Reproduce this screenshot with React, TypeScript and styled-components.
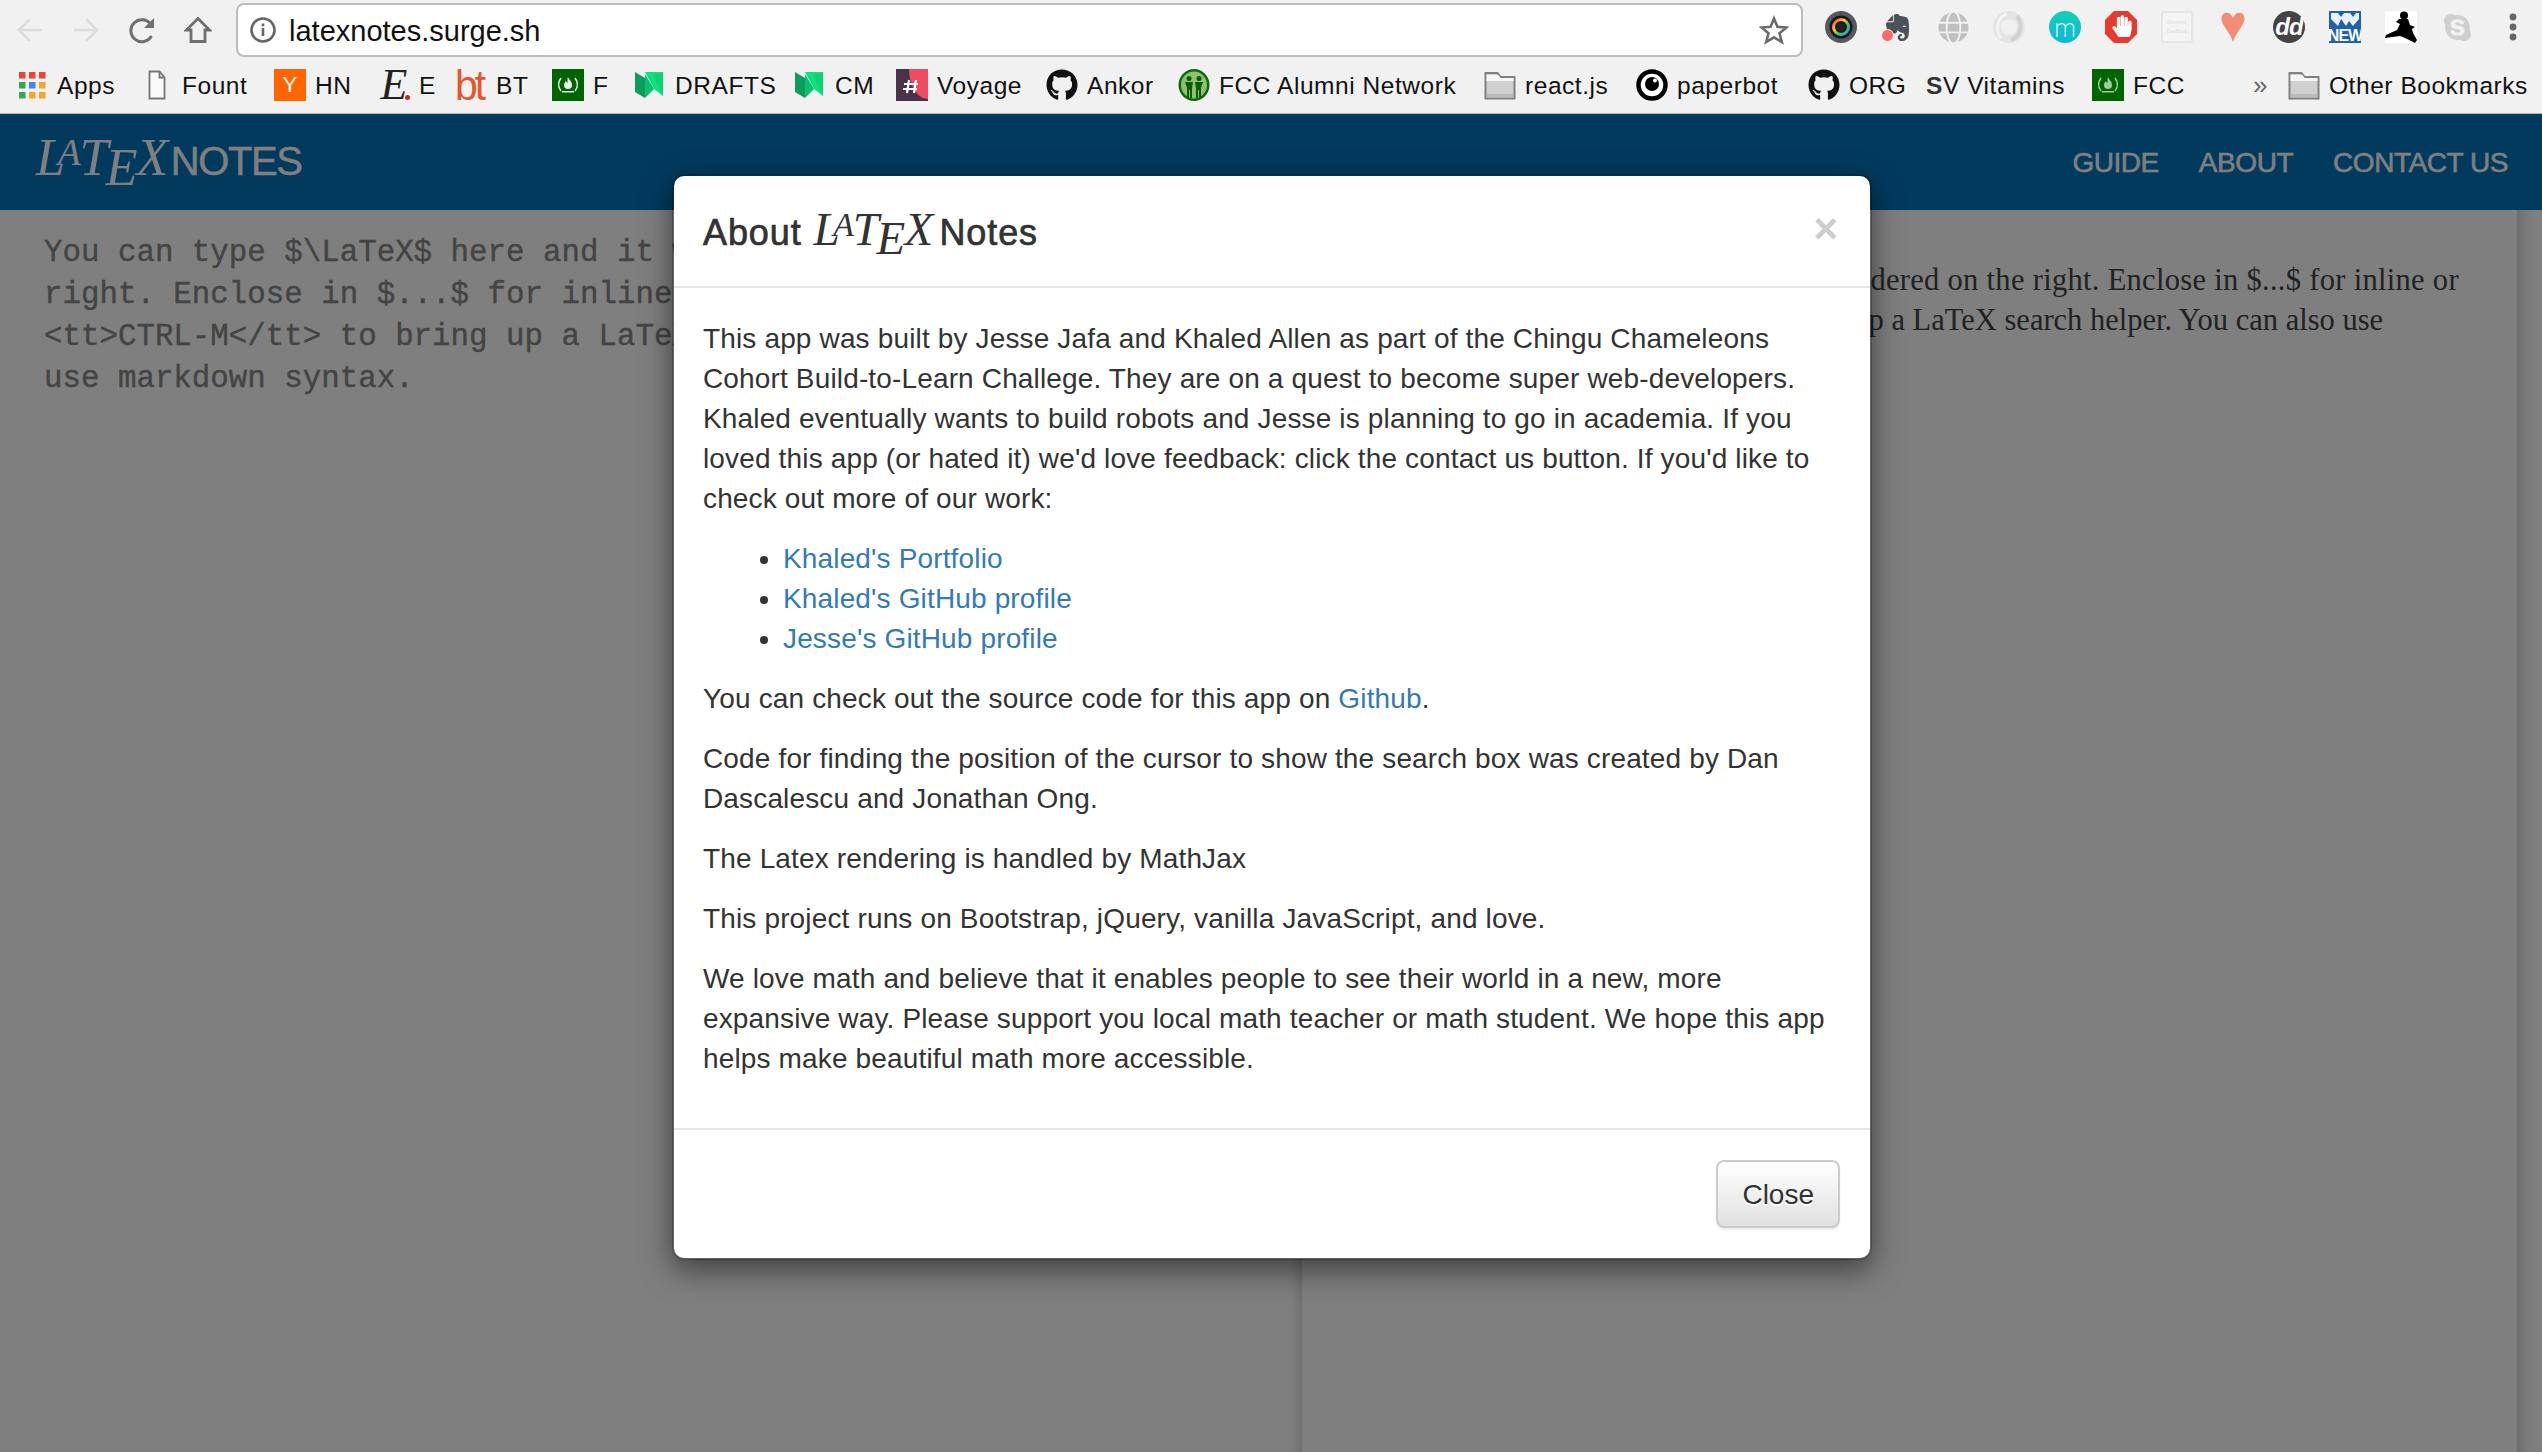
import React from "react";
import styled, { createGlobalStyle } from "styled-components";
import { FaGithub, FaEvernote, FaGlobe, FaSkype, FaHandPaper } from "react-icons/fa";

const Global = createGlobalStyle`
  html, body { margin: 0; padding: 0; height: 100%; background: #fff; overflow: hidden; }
  #root { height: 100%; }
  * { box-sizing: border-box; }
`;

const Shell = styled.div`
  width: 2542px; height: 1452px; display: flex; flex-direction: column;
  font-family: "Liberation Sans", Arial, sans-serif; overflow: hidden;
`;
const Chrome = styled.div`
  flex: 0 0 114px; background: #f1f1f1; border-bottom: 1px solid #b3b9bd;
  display: flex; flex-direction: column;
`;
const Toolbar = styled.div`
  height: 58px; padding: 3px 0 0 0; display: flex; align-items: flex-start;
`;
const NavButtons = styled.div`
  width: 236px; height: 54px; padding-left: 16px; display: flex; align-items: center; gap: 28px;
  & > svg { flex: none; }
`;
const AddressBar = styled.div`
  width: 1567px; height: 54px; background: #fff; border: 2px solid #bdbdbd; border-radius: 8px;
  display: flex; align-items: center; padding: 0 12px 0 12px; gap: 13px;
`;
const Url = styled.span`
  flex: 1; font-size: 29px; color: #111; padding-top: 2px;
`;
const Extensions = styled.div`
  display: flex; align-items: center; gap: 24px; padding: 8px 0 0 22px;
`;
const ExtSlot = styled.div`
  width: 32px; height: 32px; flex: none; display: flex; align-items: center; justify-content: center;
  position: relative;
`;
const ExtRound = styled(ExtSlot)<{ $bg: string }>`
  border-radius: 50%; background: ${(p) => p.$bg}; color: #fff; line-height: 28px;
`;
const MText = styled.span`font-size: 25px; font-weight: 300; color: #d8f6f6; font-family: "Open Sans", sans-serif;`;
const DdText = styled.span`font-size: 24px; font-weight: 700; font-style: italic; letter-spacing: -1px;`;
const NewBadge = styled(ExtSlot)`
  background: #1f62a8; color: #fff; font-size: 16px; line-height: 15px; font-weight: 700;
  align-items: flex-end; font-family: "Liberation Sans", sans-serif; letter-spacing: -1px; overflow: hidden;
`;
const NewArt = styled.svg`position: absolute; left: 0; top: 0;`;
const DiscoverBox = styled(ExtSlot)`
  background: #f4f4f4; border: 2px solid #e6e6e6; border-radius: 2px; color: #dcdcdc; font-size: 5px; line-height: 9px;
  flex-direction: column; text-align: center;
`;
const NoteDot = styled.span`
  position: absolute; left: 0; bottom: 1px; width: 13px; height: 13px; border-radius: 50%; background: #fb6a6a; border: 1px solid #fff;
`;

const BookmarksBar = styled.div`
  height: 55px; padding: 12px 0 0 0; display: flex; align-items: flex-start; position: relative;
`;
const Bookmark = styled.div<{ $w: number }>`
  flex: 0 0 ${(p) => p.$w}px; height: 32px; display: flex; align-items: center; gap: 9px;
  font-size: 24.5px; color: #111; letter-spacing: .55px; white-space: nowrap;
`;
const BookmarkIcon = styled.span`
  width: 32px; height: 32px; flex: none; display: flex; align-items: center; justify-content: center; margin-top: -2px;
`;
const SvLabel = styled.span`
  b { color: #333; }
`;
const Chevrons = styled.span`
  flex: 0 0 35px; font-size: 26px; line-height: 30px; color: #666;
`;

const Page = styled.div`
  flex: 1; position: relative; display: flex; flex-direction: column; min-height: 0;
`;
const Navbar = styled.nav`
  flex: 0 0 96px; background: #0474bc; display: flex; align-items: center; justify-content: space-between;
  padding: 0 34px 0 36px; color: #fff;
`;
const Brand = styled.div`
  display: flex; align-items: baseline; font-size: 40px; letter-spacing: -1.45px; margin-top: 2px;
  -webkit-text-stroke: .4px #fff;
`;
const Links = styled.div`
  display: flex; gap: 40px; font-size: 28px; letter-spacing: -.45px; margin-top: 1px; -webkit-text-stroke: .5px #fff;
`;
const Logo = styled.span<{ $size: number }>`
  font-family: "Liberation Serif", "Times New Roman", serif; font-style: italic; font-weight: 400;
  font-size: ${(p) => p.$size}px; letter-spacing: 0; white-space: nowrap; display: inline-block; line-height: 1;
  -webkit-text-stroke: 0;
`;
const LogoL = styled.span`margin-right: -.14em;`;
const LogoA = styled.span`font-size: .72em; vertical-align: .27em; margin-right: -.03em;`;
const LogoT = styled.span`margin-right: -.05em;`;
const LogoE = styled.span`vertical-align: -.2em; margin-right: -.02em;`;
const LogoX = styled.span`margin-right: .05em;`;

const Workspace = styled.div`
  flex: 1; display: flex; min-height: 0;
`;
const Editor = styled.div`
  flex: 0 0 1302px; padding: 22px 0 0 44px; background: #fff;
  font-family: "Liberation Mono", "Courier New", monospace; font-size: 30.8px; line-height: 42px; color: #888;
  white-space: pre; box-shadow: inset -12px 0 14px -10px rgba(0,0,0,.2); overflow: hidden;
  -webkit-text-stroke: .4px #888;
`;
const Preview = styled.div`
  flex: 1; padding: 50px 0 0 30px; background: #fff;
  font-family: "Liberation Serif", "Times New Roman", serif; font-size: 30.5px; line-height: 40px; color: #444;
  white-space: pre; overflow: hidden;
`;
const PreviewLine = styled.div<{ $spacing: number; $indent: number }>`
  letter-spacing: ${(p) => p.$spacing}px; margin-left: ${(p) => p.$indent}px;
`;
const Gutter = styled.div`
  flex: 0 0 25px; background: #fff; box-shadow: inset 14px 0 14px -10px rgba(0,0,0,.2);
`;
const Backdrop = styled.div`
  position: absolute; inset: 0; background: rgba(0,0,0,.5); padding: 60px 0 0 672px;
`;
const Modal = styled.div`
  width: 1200px; background: #fff; background-clip: padding-box; border: 2px solid rgba(0,0,0,.2); border-radius: 12px;
  box-shadow: 0 10px 30px rgba(0,0,0,.5); color: #333; font-size: 28px; line-height: 40px; letter-spacing: .15px;
`;
const ModalHeader = styled.header`
  height: 112px; padding: 0 30px 0 29px; border-bottom: 2px solid #e5e5e5; display: flex; align-items: center; justify-content: space-between;
`;
const Title = styled.h4`
  margin: 0; padding-top: 6px; font-size: 36px; font-weight: 400; letter-spacing: .9px; -webkit-text-stroke: .7px #333; display: flex; align-items: baseline;
  color: #333;
  & > span { -webkit-text-stroke: 0; }
`;
const TitleLogo = styled.span`margin: 0 4px 0 12px;`;
const CloseX = styled.button`
  border: 0; background: none; padding: 0; margin: -4px 2px 0 0; font: 700 42px/1 "Liberation Sans", sans-serif; color: #cdcdcd; cursor: pointer;
`;
const ModalBody = styled.div`
  padding: 31px 30px 29px 29px;
`;
const P = styled.p`margin: 0 0 20px;`;
const List = styled.ul`margin: 0 0 20px; padding: 0 0 0 80px;`;
const A = styled.a`color: #337ab7; text-decoration: none;`;
const ModalFooter = styled.footer`
  padding: 30px 30px 30px; border-top: 2px solid #e5e5e5; display: flex; justify-content: flex-end;
`;
const CloseButton = styled.button`
  height: 68px; padding: 2px 24px 0; border: 2px solid #ccc; border-radius: 8px; font: 400 28px "Liberation Sans", sans-serif; color: #333;
  background: linear-gradient(#fff, #e0e0e0); box-shadow: 0 2px 2px rgba(0,0,0,.08); text-shadow: 0 2px 0 #fff;
`;

const LaTeX = ({ size }: { size: number }) => (
  <Logo $size={size}>
    <LogoL>L</LogoL><LogoA>A</LogoA><LogoT>T</LogoT><LogoE>E</LogoE><LogoX>X</LogoX>
  </Logo>
);

const Back = ({ c, flip }: { c: string; flip?: boolean }) => (
  <svg width="28" height="28" viewBox="0 0 28 28" fill="none" stroke={c} strokeWidth="2.6" style={flip ? { transform: "scaleX(-1)" } : undefined}>
    <path d="M26 14H3M14 3 3 14l11 11" />
  </svg>
);
const Reload = () => (
  <svg width="28" height="28" viewBox="0 0 28 28" fill="none" stroke="#6f6f6f" strokeWidth="3">
    <path d="M23.5 20a11 11 0 1 1-.5-11.5" />
    <path d="M26 2v10H16z" fill="#6f6f6f" stroke="none" />
  </svg>
);
const HomeIcon = () => (
  <svg width="28" height="28" viewBox="0 0 28 28" fill="none" stroke="#6f6f6f" strokeWidth="2.8" strokeLinejoin="miter">
    <path d="M14 2.5 2.5 14H7v11.5h14V14h4.500z" />
  </svg>
);
const InfoIcon = () => (
  <svg width="26" height="26" viewBox="0 0 26 26">
    <circle cx="13" cy="13" r="11.500" fill="none" stroke="#666" strokeWidth="2.6" />
    <rect x="11.700" y="11" width="2.600" height="8" fill="#666" />
    <rect x="11.700" y="6.500" width="2.600" height="2.800" fill="#666" />
  </svg>
);
const StarIcon = () => (
  <svg width="30" height="30" viewBox="0 0 30 30" fill="none" stroke="#6b6b6b" strokeWidth="2.600" strokeLinejoin="miter">
    <path d="M15 3.500 18.400 11.800 27.500 12.500 20.500 18.300 22.800 27 15 22.300 7.200 27 9.500 18.300 2.500 12.500 11.600 11.800z" />
  </svg>
);
const Dots = () => (
  <svg width="8" height="32" viewBox="0 0 8 32" fill="#666">
    <circle cx="4" cy="6" r="3.400" /><circle cx="4" cy="16" r="3.400" /><circle cx="4" cy="26" r="3.400" />
  </svg>
);
const AppsIcon = () => {
  const cs = ["#ea4335", "#ea4335", "#ea4335", "#34a853", "#4285f4", "#f5a623", "#34a853", "#f5a623", "#f5a623"];
  return (
    <svg width="28" height="28" viewBox="0 0 28 28">
      {cs.map((c, i) => <rect key={i} x={1 + (i % 3) * 10} y={1 + Math.floor(i / 3) * 10} width="6.500" height="6.500" fill={c} />)}
    </svg>
  );
};
const DocIcon = () => (
  <svg width="18" height="30" viewBox="0 0 18 30" fill="#fafafa" stroke="#777" strokeWidth="1.800">
    <path d="M1.500 1.500h10l5 6v21h-15z" /><path d="M11.500 1.500v6h5" fill="none" />
  </svg>
);
const Square = styled.span<{ $bg: string; $c: string }>`
  width: 32px; height: 32px; background: ${(p) => p.$bg}; color: ${(p) => p.$c}; display: flex; align-items: center; justify-content: center;
  font-size: 22px;
`;
const ItalicE = styled.span`
  font: italic 400 44px/32px "Liberation Serif", serif; color: #222; position: relative; width: 32px; text-align: center; letter-spacing: 0;
  &::after { content: ""; position: absolute; right: 0; bottom: 1px; width: 5px; height: 5px; border-radius: 50%; background: #c22; }
`;
const BtMark = styled.span`
  font: 400 43px/30px "Liberation Sans", sans-serif; color: #e2582e; letter-spacing: -3px; width: 32px; transform: scaleX(.95); transform-origin: left;
`;
const FccIcon = ({ dim }: { dim?: boolean }) => (
  <svg width="32" height="32" viewBox="0 0 32 32">
    <rect width="32" height="32" fill="#006400" />
    <g fill="none" stroke={dim ? "#9ccf9c" : "#e8f5e8"} strokeWidth="1.500">
      <path d="M9 9c-3 4-3 9 0 13M23 9c3 4 3 9 0 13" />
    </g>
    <path d="M16 8c1 3 4 4 4 8a4 4 0 0 1-8 0c0-2 1-3 2-4 0 1 1 2 1.500 1.500C16 12 15 10 16 8z" fill={dim ? "#9ccf9c" : "#e8f5e8"} />
    <rect x="10" y="22" width="12" height="1.500" fill={dim ? "#9ccf9c" : "#e8f5e8"} />
  </svg>
);
const MediumIcon = () => (
  <svg width="28" height="32" viewBox="0 0 28 32" style={{ marginLeft: -2 }}>
    <path d="M0 3 10 9v20L0 23z" fill="#0a9d5c" />
    <path d="M10 5 19 20 10 29z" fill="#0cc06f" />
    <path d="M10 3 28 3v24L19 20z" fill="#12e07f" />
    <path d="M18 6l10-3v24z" fill="#0fd277" />
  </svg>
);
const VoyageIcon = () => (
  <svg width="32" height="32" viewBox="0 0 32 32">
    <rect width="32" height="32" fill="#4a3348" />
    <path d="M13 0h19v30C20 30 13 14 13 0z" fill="#ef4c64" />
    <path d="M11 24l2-13M18 24l2-13M8 15h14M7 20h14" stroke="#fff" strokeWidth="2.200" fill="none" />
  </svg>
);
const AlumniIcon = () => (
  <svg width="32" height="32" viewBox="0 0 32 32">
    <ellipse cx="16" cy="16" rx="15.500" ry="16" fill="#0a6a0a" />
    <ellipse cx="16" cy="16" rx="13" ry="13.500" fill="#8fbf6f" />
    <g fill="#0a5c0a">
      <circle cx="11" cy="9.500" r="2.500" /><circle cx="21" cy="9.500" r="2.500" />
      <path d="M7 13h8l-1 6v10h-2v-8h-1v8H9V19z" /><path d="M17 13h8l-2 6v10h-2v-8h-1v8h-2V19z" />
    </g>
  </svg>
);
const FolderIcon = () => (
  <svg width="32" height="32" viewBox="0 0 32 32">
    <path d="M1.500 29.500V4h12l3 4h14v21.500z" fill="#d0d0d0" stroke="#808080" strokeWidth="2" />
    <path d="M2.500 6h12l2 3h13v3H2.500z" fill="#f5f5f5" />
    <rect x="2.500" y="25" width="27" height="3.500" fill="#bbb" />
  </svg>
);
const PaperbotIcon = () => (
  <svg width="32" height="32" viewBox="0 0 32 32">
    <circle cx="16" cy="16" r="13.500" fill="#fff" stroke="#000" strokeWidth="4.500" />
    <circle cx="16" cy="15" r="7" fill="#000" />
    <circle cx="19" cy="11.500" r="2" fill="#fff" />
  </svg>
);
const LensIcon = () => (
  <svg width="32" height="32" viewBox="0 0 32 32">
    <defs>
      <linearGradient id="rb" x1="0" y1="0" x2="1" y2="1">
        <stop offset="0" stopColor="#f33" /><stop offset=".35" stopColor="#fc3" /><stop offset=".65" stopColor="#3c6" /><stop offset="1" stopColor="#39f" />
      </linearGradient>
    </defs>
    <circle cx="16" cy="16" r="16" fill="#55585f" />
    <circle cx="16" cy="16" r="11.500" fill="#17181c" />
    <circle cx="16" cy="16" r="7.500" fill="none" stroke="url(#rb)" strokeWidth="3" />
    <circle cx="16" cy="16" r="4" fill="#222" />
  </svg>
);
const SwirlIcon = () => (
  <svg width="32" height="32" viewBox="0 0 32 32">
    <circle cx="16" cy="16" r="12" fill="none" stroke="#e4e4e4" strokeWidth="8" />
    <path d="M24 5C31 14 27 26 18 29" fill="none" stroke="#d0d0d0" strokeWidth="4" />
    <path d="M8 27C1 18 5 6 14 3" fill="none" stroke="#f4f4f4" strokeWidth="3" />
  </svg>
);
const HeartIcon = () => (
  <svg width="26" height="32" viewBox="0 0 26 32">
    <path d="M13 31C9.500 20 1 14 1.500 6.500 2.500 0 10.500 0 13 7 15.500 0 23.500 0 24.500 6.500 25 14 16.500 20 13 31z" fill="#f28c72" />
  </svg>
);
const NinjaIcon = () => (
  <svg width="32" height="32" viewBox="0 0 32 32">
    <rect width="32" height="32" fill="#fff" />
    <circle cx="19" cy="4.500" r="4" fill="#000" />
    <path d="M14 8h9l2 6 5 2-3 2 1 4 4 7-2 3-10-5-5-2-15 2 1-3 11-5 3-6-4-2z" fill="#000" />
  </svg>
);
const StopHand = styled.span`position: absolute; left: 6px; top: 4px; line-height: 0;`;
const StopIcon = () => (
  <ExtSlot>
    <svg width="32" height="32" viewBox="0 0 32 32"><path d="M9 0h14l9 9v14l-9 9H9l-9-9V9z" fill="#e8392f" /></svg>
    <StopHand><FaHandPaper size={22} color="#fff" /></StopHand>
  </ExtSlot>
);

const bookmarks: { w: number; icon: React.ReactNode; label: React.ReactNode }[] = [
  { w: 125, icon: <AppsIcon />, label: "Apps" },
  { w: 133, icon: <DocIcon />, label: "Fount" },
  { w: 104, icon: <Square $bg="#ff6600" $c="#fff">Y</Square>, label: "HN" },
  { w: 77, icon: <ItalicE>E</ItalicE>, label: "E" },
  { w: 97, icon: <BtMark>bt</BtMark>, label: "BT" },
  { w: 82, icon: <FccIcon />, label: "F" },
  { w: 160, icon: <MediumIcon />, label: "DRAFTS" },
  { w: 102, icon: <MediumIcon />, label: "CM" },
  { w: 150, icon: <VoyageIcon />, label: "Voyage" },
  { w: 132, icon: <FaGithub size={32} color="#111" />, label: "Ankor" },
  { w: 306, icon: <AlumniIcon />, label: "FCC Alumni Network" },
  { w: 152, icon: <FolderIcon />, label: "react.js" },
  { w: 172, icon: <PaperbotIcon />, label: "paperbot" },
  { w: 118, icon: <FaGithub size={32} color="#111" />, label: "ORG" },
  { w: 166, icon: null, label: <SvLabel><b>S</b>V Vitamins</SvLabel> },
  { w: 161, icon: <FccIcon dim />, label: "FCC" },
];

const editorText = `You can type $\\LaTeX$ here and it will be rendered on the
right. Enclose in $...$ for inline or $$...$$ for display. Use
<tt>CTRL-M</tt> to bring up a LaTeX search helper. You can also
use markdown syntax.`;

const previewLines = [
  { text: "You can type LaTeX here and it will be rendered on the right. Enclose in $...$ for inline or", spacing: 0.3, indent: 0 },
  { text: "$$...$$ for display. Use CTRL-M to bring up a LaTeX search helper. You can also use", spacing: 0, indent: 4 },
  { text: "markdown syntax.", spacing: 0, indent: 15 },
];

export default function App() {
  return (
    <Shell>
      <Global />
      <Chrome>
        <Toolbar>
          <NavButtons>
            <Back c="#dcdcdc" /><Back c="#dcdcdc" flip /><Reload /><HomeIcon />
          </NavButtons>
          <AddressBar>
            <InfoIcon />
            <Url>latexnotes.surge.sh</Url>
            <StarIcon />
          </AddressBar>
          <Extensions>
            <ExtSlot><LensIcon /></ExtSlot>
            <ExtSlot><FaEvernote size={31} color="#4b5358" /><NoteDot /></ExtSlot>
            <ExtSlot><FaGlobe size={31} color="#c0c0c0" /></ExtSlot>
            <ExtSlot><SwirlIcon /></ExtSlot>
            <ExtRound $bg="linear-gradient(#12cfb4, #0fb8d8)"><MText>m</MText></ExtRound>
            <StopIcon />
            <DiscoverBox>Discover<br />DevBook</DiscoverBox>
            <ExtSlot><HeartIcon /></ExtSlot>
            <ExtRound $bg="#444"><DdText>dd</DdText></ExtRound>
            <NewBadge>
              <NewArt width="32" height="17" viewBox="0 0 32 17">
                <path d="M2 2h7l3 4 3-4h6l3 4 3-4h3v6l-6 7-4-5-3 5-5-7-3 7-7-7z" fill="#e8f0f8" />
              </NewArt>
              NEW
            </NewBadge>
            <ExtSlot><NinjaIcon /></ExtSlot>
            <ExtSlot><FaSkype size={31} color="#cfcfcf" /></ExtSlot>
            <ExtSlot><Dots /></ExtSlot>
          </Extensions>
        </Toolbar>
        <BookmarksBar>
          <Bookmark $w={16} />
          {bookmarks.map((b, i) => (
            <Bookmark key={i} $w={b.w}>
              {b.icon && <BookmarkIcon>{b.icon}</BookmarkIcon>}
              {b.label}
            </Bookmark>
          ))}
          <Chevrons>»</Chevrons>
          <Bookmark $w={250}>
            <BookmarkIcon><FolderIcon /></BookmarkIcon>
            Other Bookmarks
          </Bookmark>
        </BookmarksBar>
      </Chrome>
      <Page>
        <Navbar>
          <Brand><LaTeX size={52} />NOTES</Brand>
          <Links><span>GUIDE</span><span>ABOUT</span><span>CONTACT US</span></Links>
        </Navbar>
        <Workspace>
          <Editor>{editorText}</Editor>
          <Preview>
            {previewLines.map((l) => (
              <PreviewLine key={l.text} $spacing={l.spacing} $indent={l.indent}>{l.text}</PreviewLine>
            ))}
          </Preview>
          <Gutter />
        </Workspace>
        <Backdrop>
          <Modal>
            <ModalHeader>
              <Title>About<TitleLogo><LaTeX size={47} /></TitleLogo>Notes</Title>
              <CloseX>×</CloseX>
            </ModalHeader>
            <ModalBody>
              <P>This app was built by Jesse Jafa and Khaled Allen as part of the Chingu Chameleons Cohort Build-to-Learn Challege. They are on a quest to become super web-developers. Khaled eventually wants to build robots and Jesse is planning to go in academia. If you loved this app (or hated it) we'd love feedback: click the contact us button. If you'd like to check out more of our work:</P>
              <List>
                <li><A href="#">Khaled's Portfolio</A></li>
                <li><A href="#">Khaled's GitHub profile</A></li>
                <li><A href="#">Jesse's GitHub profile</A></li>
              </List>
              <P>You can check out the source code for this app on <A href="#">Github</A>.</P>
              <P>Code for finding the position of the cursor to show the search box was created by Dan Dascalescu and Jonathan Ong.</P>
              <P>The Latex rendering is handled by MathJax</P>
              <P>This project runs on Bootstrap, jQuery, vanilla JavaScript, and love.</P>
              <P>We love math and believe that it enables people to see their world in a new, more expansive way. Please support you local math teacher or math student. We hope this app helps make beautiful math more accessible.</P>
            </ModalBody>
            <ModalFooter>
              <CloseButton>Close</CloseButton>
            </ModalFooter>
          </Modal>
        </Backdrop>
      </Page>
    </Shell>
  );
}
